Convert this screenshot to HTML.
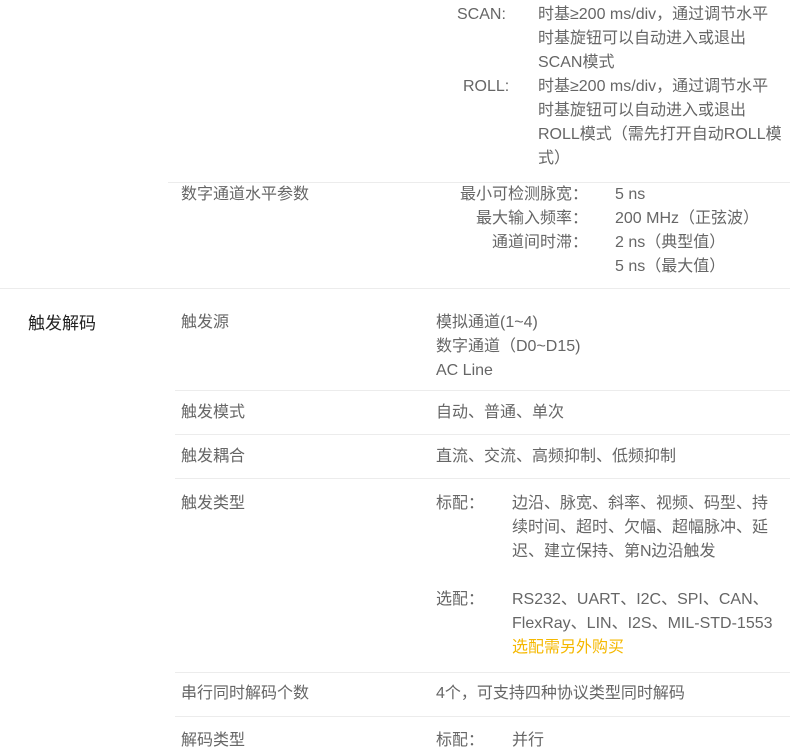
<!DOCTYPE html>
<html><head><meta charset="utf-8"><style>
body{margin:0;width:790px;height:741px;overflow:hidden;background:#fff;font-family:"Liberation Sans","Noto Sans CJK SC",sans-serif;font-size:16px;color:#666;position:relative}
.t{position:absolute;line-height:24px;white-space:nowrap}
.h{position:absolute;height:1px;background:#ececec}
.r{text-align:right}
</style></head><body>
<div class="t" style="left:457px;top:3px">SCAN:</div>
<div class="t" style="left:538px;top:3px">时基≥200 ms/div，通过调节水平<br>时基旋钮可以自动进入或退出<br>SCAN模式</div>
<div class="t" style="left:463px;top:75px">ROLL:</div>
<div class="t" style="left:538px;top:75px">时基≥200 ms/div，通过调节水平<br>时基旋钮可以自动进入或退出<br>ROLL模式（需先打开自动ROLL模<br>式）</div>
<div class="h" style="left:168px;right:0;top:182px"></div>
<div class="t" style="left:181px;top:183px">数字通道水平参数</div>
<div class="t r" style="left:380px;width:208px;top:183px">最小可检测脉宽：<br>最大输入频率：<br>通道间时滞：</div>
<div class="t" style="left:615px;top:183px">5 ns<br>200 MHz（正弦波）<br>2 ns（典型值）<br>5 ns（最大值）</div>
<div class="h" style="left:0;right:0;top:288px"></div>
<div class="t" style="left:28px;top:312px;color:#222;font-size:17px">触发解码</div>
<div class="t" style="left:181px;top:311px">触发源</div>
<div class="t" style="left:436px;top:311px">模拟通道(1~4)<br>数字通道（D0~D15)<br>AC Line</div>
<div class="h" style="left:175px;right:0;top:390px"></div>
<div class="t" style="left:181px;top:401px">触发模式</div>
<div class="t" style="left:436px;top:401px">自动、普通、单次</div>
<div class="h" style="left:175px;right:0;top:434px"></div>
<div class="t" style="left:181px;top:445px">触发耦合</div>
<div class="t" style="left:436px;top:445px">直流、交流、高频抑制、低频抑制</div>
<div class="h" style="left:175px;right:0;top:478px"></div>
<div class="t" style="left:181px;top:492px">触发类型</div>
<div class="t" style="left:436px;top:492px">标配：</div>
<div class="t" style="left:512px;top:492px">边沿、脉宽、斜率、视频、码型、持<br>续时间、超时、欠幅、超幅脉冲、延<br>迟、建立保持、第N边沿触发</div>
<div class="t" style="left:436px;top:588px">选配：</div>
<div class="t" style="left:512px;top:588px">RS232、UART、I2C、SPI、CAN、<br>FlexRay、LIN、I2S、MIL-STD-1553<br><span style="color:#f5b800">选配需另外购买</span></div>
<div class="h" style="left:175px;right:0;top:672px"></div>
<div class="t" style="left:181px;top:682px">串行同时解码个数</div>
<div class="t" style="left:436px;top:682px">4个，可支持四种协议类型同时解码</div>
<div class="h" style="left:175px;right:0;top:716px"></div>
<div class="t" style="left:181px;top:729px">解码类型</div>
<div class="t" style="left:436px;top:729px">标配：</div>
<div class="t" style="left:512px;top:729px">并行</div>
</body></html>
